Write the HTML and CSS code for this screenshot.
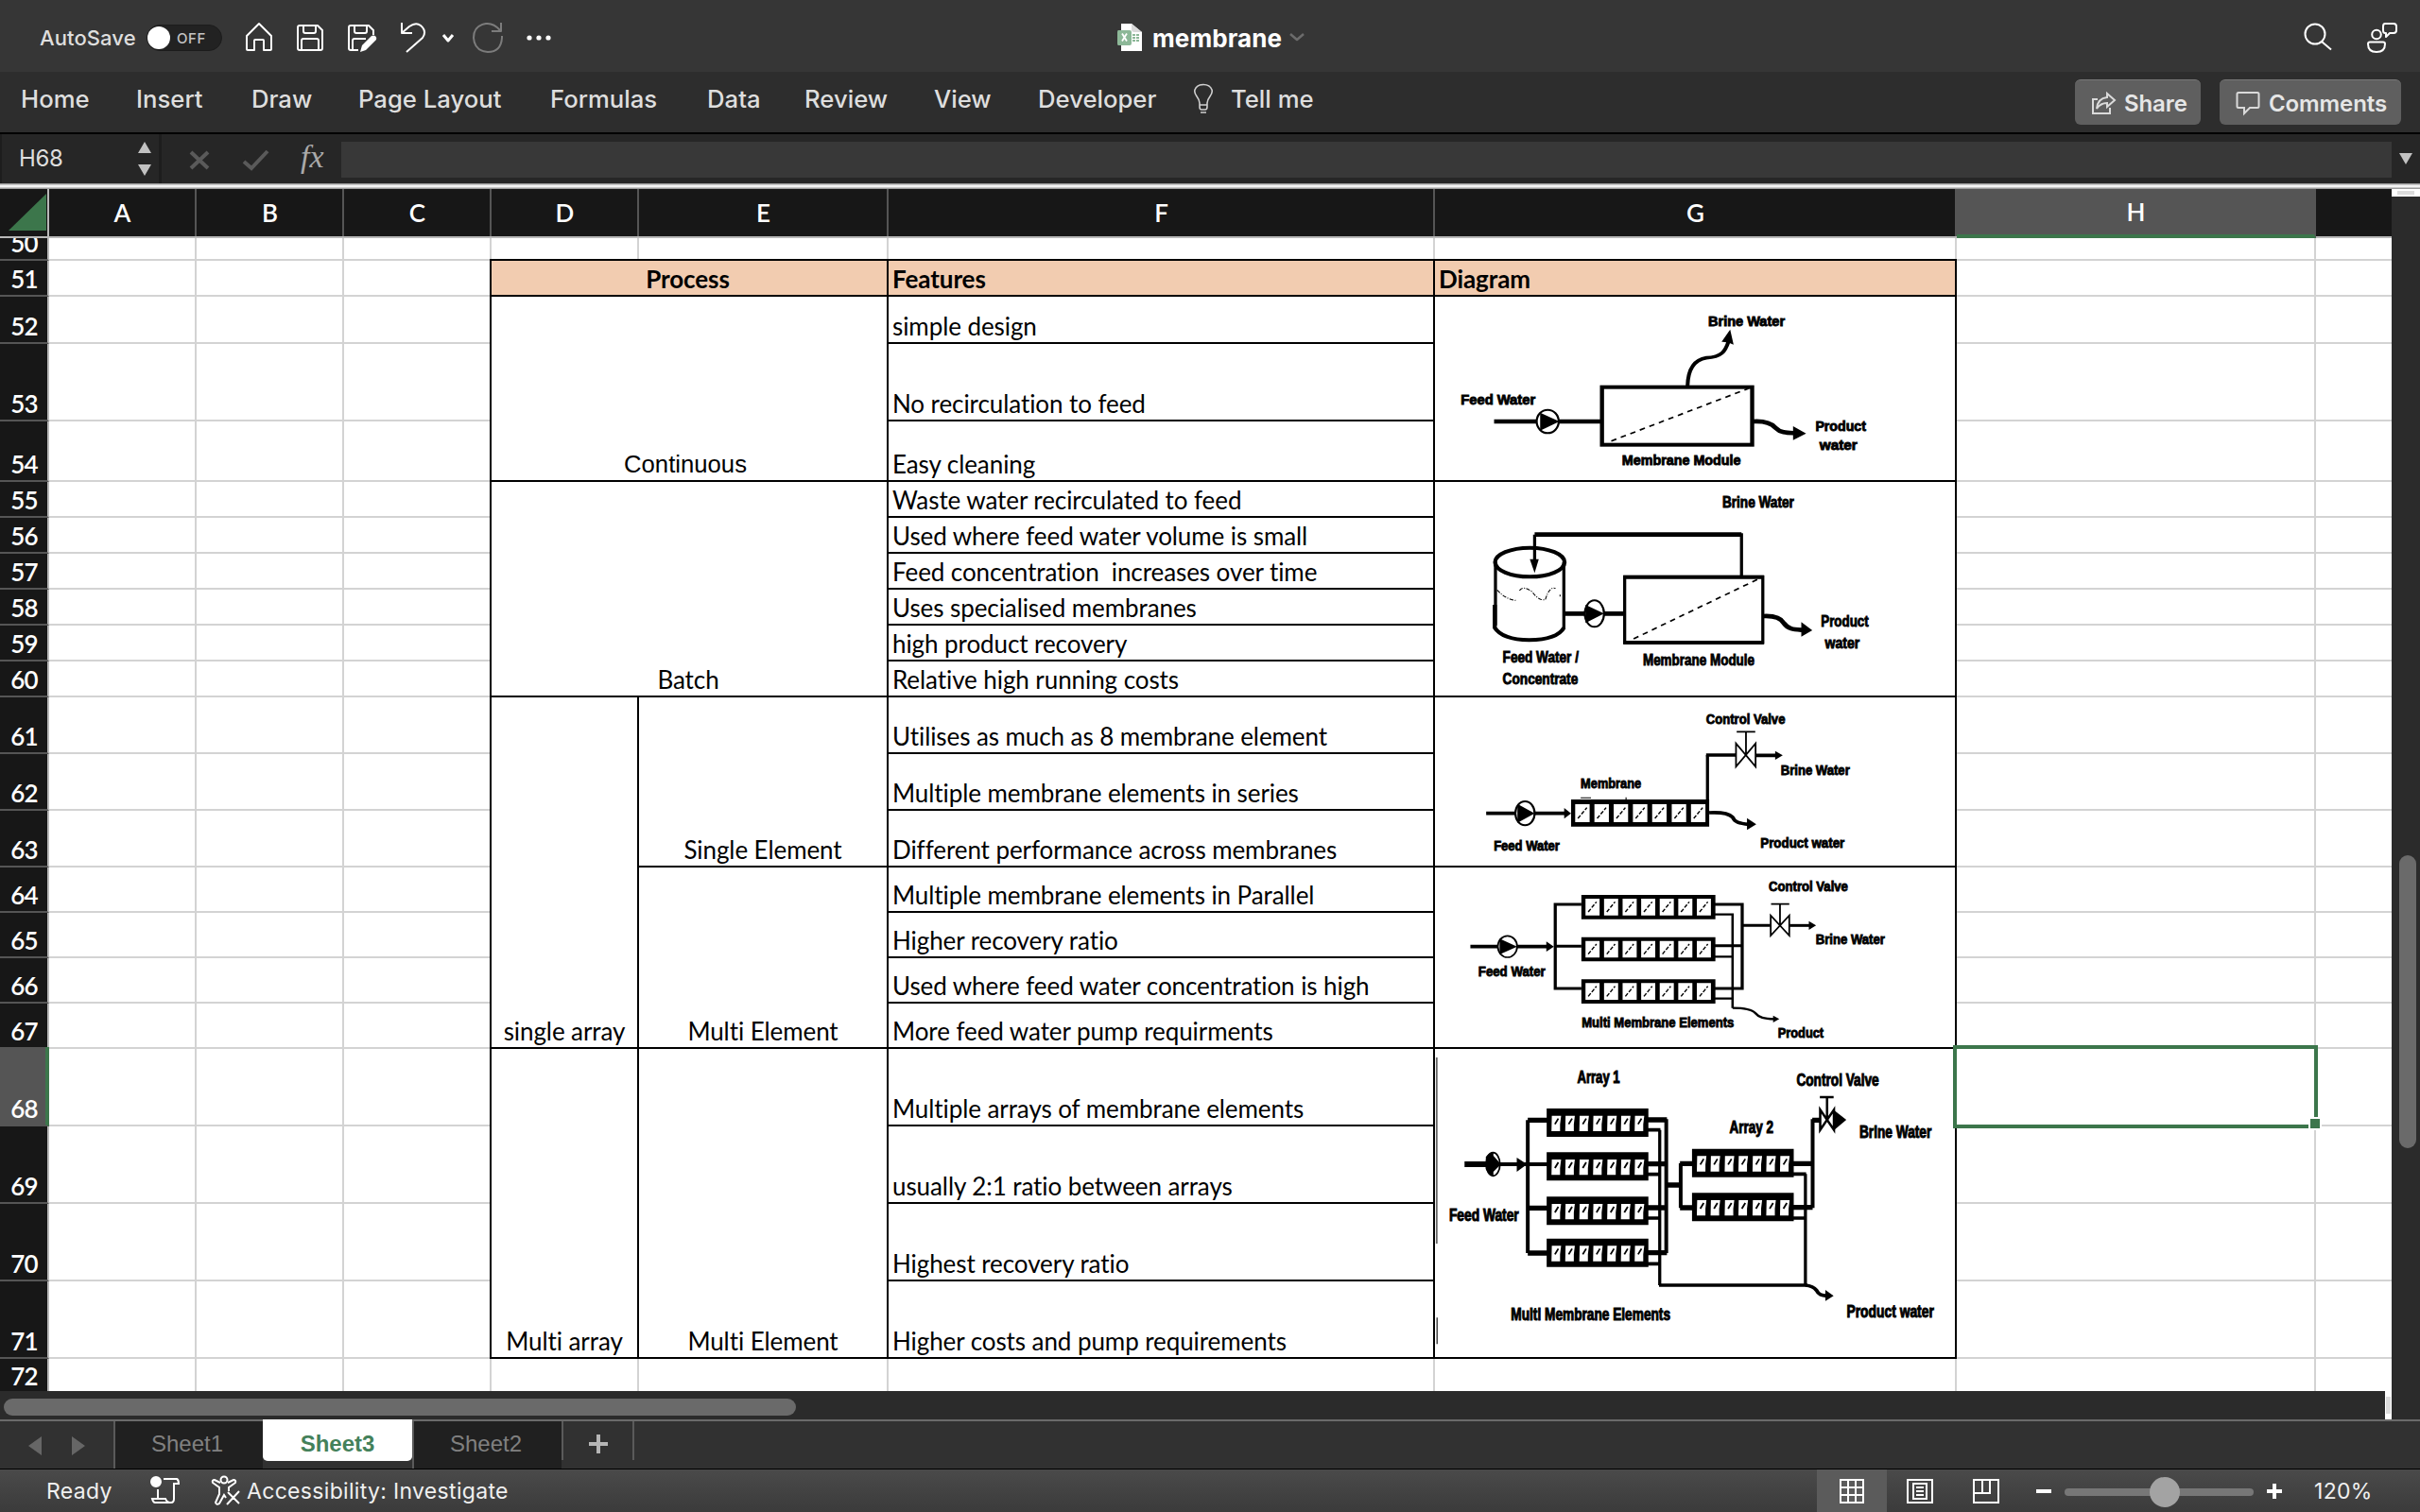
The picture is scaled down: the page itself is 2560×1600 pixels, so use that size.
FILE: index.html
```html
<!DOCTYPE html>
<html lang="en">
<head>
<meta charset="utf-8">
<title>membrane</title>
<link rel="stylesheet" href="styles.css">
</head>
<body>
<div class="app">
  <header class="titlebar">
    <div class="quick">
      <span class="autosave">AutoSave</span>
      <span class="toggle"><i class="knob"></i>OFF</span>
      <svg class="ic home" viewBox="258 22 32 36" width="32" height="36"><path d="M261 38 274 25l13 13v14q0 1-1 1h-7V43q0-1-1-1h-8q-1 0-1 1v10h-7q-1 0-1-1z"/></svg>
      <svg class="ic save" viewBox="312 22 32 36" width="32" height="36"><path d="M317 27h19l5 5v19q0 2-2 2h-22q-2 0-2-2V29q0-2 2-2zM321 27v6q0 2 2 2h9q2 0 2-2v-6M319 53V43q0-2 2-2h14q2 0 2 2v10"/></svg>
      <svg class="ic saveas" viewBox="366 22 36 36" width="36" height="36"><path d="M379 53h-8q-2 0-2-2V29q0-2 2-2h19l5 5v5M375 27v6q0 2 2 2h9q2 0 2-2v-6M373 53V43q0-2 2-2h12"/><path class="solid" d="M381 55l2-7 10-10q2-1 4 0 2 2 1 4l-11 11z"/></svg>
      <svg class="ic undo" viewBox="420 22 34 36" width="34" height="36"><path d="M425 24v11h11M425 35l8-7q7-5 12-1 7 6 2 13L430 55"/></svg>
      <svg class="ic chev" viewBox="466 34 17 14" width="17" height="14"><path class="thick" d="M469 38l5 6 5-6"/></svg>
      <svg class="ic redo" viewBox="498 22 36 36" width="36" height="36"><path class="dim" d="M530 24v9h-10M529 32q-7-8-15-7-13 2-13 15 1 14 15 15 14 0 15-15v-2"/></svg>
      <svg class="ic dots" viewBox="554 34 32 12" width="32" height="12"><circle class="solid" cx="560" cy="40" r="2.600"/><circle class="solid" cx="570" cy="40" r="2.600"/><circle class="solid" cx="580" cy="40" r="2.600"/></svg>
    </div>
    <div class="doc">
      <svg viewBox="1180 22 32 36" width="32" height="36"><path fill="#fff" d="M1186 25h11l11 9v20h-22z"/><path fill="#d9d9d9" d="M1197 25l11 9h-8q-3 0-3-3z"/><path fill="#8db898" d="M1183 32h12q2 0 2 2v12q0 2-2 2h-12q-1 0-1-2V34q0-2 1-2zM1198 36h3v2h-3zM1202 36h3v2h-3zM1198 39h3v2h-3zM1202 39h3v2h-3zM1198 42h3v2h-3zM1202 42h3v2h-3z"/><path stroke="#fff" stroke-width="1.800" d="M1187 35.500l5 8M1192 35.500l-5 8"/></svg>
      <b class="docname">membrane</b>
      <svg class="ic" viewBox="1362 34 20 14" width="20" height="14"><path class="dimmer" d="M1365 37l7 6 7-6"/></svg>
    </div>
    <div class="titleright">
      <svg class="ic" viewBox="2436 24 34 34" width="34" height="34"><circle cx="2449" cy="37" r="10.500"/><path d="M2456 45l10 8.500"/></svg>
      <svg class="ic" viewBox="2502 22 36 36" width="36" height="36"><circle cx="2514" cy="36.500" r="4.800"/><path d="M2507 44.500h14q2 0 2 2 0 8.500-9 8.500t-9-8.500q0-2 2-2zM2523 25h9q3 0 3 3v4q0 3-3 3h-4l-4 4v-4h-1q-2 0-2-3v-4q0-3 2-3z"/></svg>
    </div>
  </header>
  <nav class="ribbon">
    <div class="tabs">
      <span>Home</span><span>Insert</span><span>Draw</span><span>Page Layout</span><span>Formulas</span><span>Data</span><span>Review</span><span>View</span><span>Developer</span>
      <svg class="bulb" viewBox="1262 88 24 34" width="24" height="34"><path d="M1269 113v-4q0-3-3-7-3-4-2-7 2-5.500 9-5.500t9 5.500q1 3-2 7-3 4-3 7v4q0 3-2 3h-4q-2 0-2-3zM1269 111h8M1270 119h6"/></svg>
      <span>Tell me</span>
    </div>
    <div class="buttons">
      <button class="btn share"><svg viewBox="2211 94 28 28" width="28" height="28"><path d="M2219 104h-5v15h18v-6M2218 114q1-11 11-12v-4l8 7-8 7v-4q-7 0-11 6z"/></svg>Share</button>
      <button class="btn comments"><svg viewBox="2364 94 28 28" width="28" height="28"><path d="M2368 97h20q1.500 0 1.500 1.500v13q0 1.500-1.500 1.500h-8l-6 6v-6h-6q-1.500 0-1.500-1.500v-13q0-1.500 1.500-1.500z"/></svg>Comments</button>
    </div>
  </nav>
  <div class="formulabar">
    <div class="namebox"><span>H68</span><svg viewBox="144 148 18 42" width="18" height="42"><path d="M146 163l7-12 7 12zM146 175l7 12 7-12z"/></svg></div>
    <svg class="fxicons" viewBox="196 150 96 36" width="96" height="36"><path d="M202 161l18 17M220 161l-18 17"/><path d="M258 171l8 7 17-18"/></svg>
    <span class="fx">fx</span>
    <div class="field"></div>
    <svg class="fxdown" viewBox="2536 160 18 18" width="18" height="18"><path d="M2538 163h14l-7 12z"/></svg>
  </div>
  <div class="strip"></div>
  <main class="work">
    <section class="sheetarea">
      <div class="colheads">
        <div class="corner"><svg width="40" height="40" viewBox="0 0 40 40"><path d="M40 0v39H0z"/></svg></div>
        <div>A</div><div>B</div><div>C</div><div>D</div><div>E</div><div>F</div><div>G</div><div class="active">H</div><div class="nosep"></div>
      </div>
      <div class="grid">
        <div class="rh r50">50</div><div class="rh r51">51</div><div class="rh r52">52</div><div class="rh r53">53</div><div class="rh r54">54</div><div class="rh r55">55</div><div class="rh r56">56</div><div class="rh r57">57</div><div class="rh r58">58</div><div class="rh r59">59</div><div class="rh r60">60</div><div class="rh r61">61</div><div class="rh r62">62</div><div class="rh r63">63</div><div class="rh r64">64</div><div class="rh r65">65</div><div class="rh r66">66</div><div class="rh r67">67</div><div class="rh r68 active">68</div><div class="rh r69">69</div><div class="rh r70">70</div><div class="rh r71">71</div><div class="rh r72">72</div>
        <i class="line r50"></i><i class="line r51"></i><i class="line r52"></i><i class="line r53"></i><i class="line r54"></i><i class="line r55"></i><i class="line r56"></i><i class="line r57"></i><i class="line r58"></i><i class="line r59"></i><i class="line r60"></i><i class="line r61"></i><i class="line r62"></i><i class="line r63"></i><i class="line r64"></i><i class="line r65"></i><i class="line r66"></i><i class="line r67"></i><i class="line r68"></i><i class="line r69"></i><i class="line r70"></i><i class="line r71"></i>
        <i class="col cA"></i><i class="col cB"></i><i class="col cC"></i><i class="col cD"></i><i class="col cE"></i><i class="col cF"></i><i class="col cG"></i><i class="col cH"></i>

        <div class="cell head mid process">Process</div><div class="cell head cF r51">Features</div><div class="cell head cG r51">Diagram</div>
        <div class="cell mid continuous">Continuous</div><div class="cell mid batch">Batch</div>
        <div class="cell mid single">single array</div><div class="cell mid multi">Multi array</div>
        <div class="cell mid cE s61">Single Element</div><div class="cell mid cE s64">Multi Element</div><div class="cell mid cE s68">Multi Element</div>
        <div class="cell cF r52">simple design</div><div class="cell cF r53">No recirculation to feed</div><div class="cell cF r54">Easy cleaning</div>
        <div class="cell cF r55">Waste water recirculated to feed</div><div class="cell cF r56">Used where feed water volume is small</div><div class="cell cF r57">Feed concentration&nbsp; increases over time</div><div class="cell cF r58">Uses specialised membranes</div><div class="cell cF r59">high product recovery</div><div class="cell cF r60">Relative high running costs</div>
        <div class="cell cF r61">Utilises as much as 8 membrane element</div><div class="cell cF r62">Multiple membrane elements in series</div><div class="cell cF r63">Different performance across membranes</div>
        <div class="cell cF r64">Multiple membrane elements in Parallel</div><div class="cell cF r65">Higher recovery ratio</div><div class="cell cF r66">Used where feed water concentration is high</div><div class="cell cF r67">More feed water pump requirments</div>
        <div class="cell cF r68">Multiple arrays of membrane elements</div><div class="cell cF r69">usually 2:1 ratio between arrays</div><div class="cell cF r70">Highest recovery ratio</div><div class="cell cF r71">Higher costs and pump requirements</div>

        <div class="cell pic cG s52">
          <svg viewBox="22 42 1513 582" preserveAspectRatio="none">
            <rect class="w12" x="508" y="329" width="437" height="183"/>
            <path class="w5 dash" d="M535 500 935 333"/>
            <path class="w14" d="M194 438H508"/><ellipse class="hole w6" cx="350" cy="438" rx="32" ry="37"/><path class="f" d="M328 410l56 28-56 29z"/>
            <path class="w11" d="M757 325q2-80 55-89c45-2 55-22 64-51"/><path class="f" d="M881 146l10 48q-16-10-35-9z"/>
            <path class="w14" d="M948 438q45-3 65 20c15 17 35 16 58 17"/><path class="f" d="M1064 453l38 23-38 21z"/>
            <text lengthAdjust="spacingAndGlyphs" x="817" y="136" textLength="223">Brine Water</text><text lengthAdjust="spacingAndGlyphs" x="97" y="384" textLength="217">Feed Water</text><text lengthAdjust="spacingAndGlyphs" x="566" y="577" textLength="346">Membrane Module</text><text lengthAdjust="spacingAndGlyphs" x="1129" y="468" textLength="147">Product</text><text lengthAdjust="spacingAndGlyphs" x="1141" y="529" textLength="110">water</text>
          </svg>
        </div>
        <div class="cell pic cG s55">
          <svg viewBox="22 15 1513 678" preserveAspectRatio="none">
            <path class="w14" d="M312 182H914"/><path class="w9" d="M312 182V270M914 178V315"/><path class="f" d="M298 260h26l-12 44z"/>
            <ellipse class="w12" cx="298" cy="270" rx="101" ry="46"/><path class="w9" d="M198 270V470M397 270V480"/><path class="w12" d="M196 405V478q22 38 100 39 82-2 101-39"/>
            <path class="w3 dash2" d="M203 358q22 28 54 33M268 360q10-18 38 5 18 28 37 24 12-44 30-36M386 373v6"/>
            <path class="w14" d="M400 433H575"/><ellipse class="hole w6" cx="486" cy="433" rx="28" ry="42"/><path class="f" d="M460 405l54 28-54 30z"/>
            <rect class="w9" x="574" y="316" width="402" height="209"/><path class="w12" d="M570 317H979M570 525H979"/><path class="w5 dash" d="M600 513 965 322"/>
            <path class="w14" d="M979 441q45-2 58 22c14 20 28 20 55 22"/><path class="f" d="M1088 460l32 26-32 20z"/>
            <g class="mid-size"><text lengthAdjust="spacingAndGlyphs" x="858" y="96" textLength="209">Brine Water</text><text lengthAdjust="spacingAndGlyphs" x="219" y="589" textLength="221">Feed Water /</text><text lengthAdjust="spacingAndGlyphs" x="219" y="656" textLength="219">Concentrate</text><text lengthAdjust="spacingAndGlyphs" x="627" y="597" textLength="325">Membrane Module</text><text lengthAdjust="spacingAndGlyphs" x="1145" y="475" textLength="139">Product</text><text lengthAdjust="spacingAndGlyphs" x="1157" y="543" textLength="101">water</text></g>
          </svg>
        </div>
        <div class="cell pic cG s61">
          <svg viewBox="22 24 1513 534" preserveAspectRatio="none">
            <path class="w11" d="M171 392H405"/><ellipse class="hole w6" cx="284" cy="392" rx="28" ry="38"/><path class="f" d="M262 362l50 30-50 30zM398 375l20 17-20 17z"/>
            <path class="f" d="M418 348H820V434H418z"/>
            <path class="cut" d="M430 363h42v57h-42zM486 363h42v57h-42zM542 363h42v57h-42zM598 363h42v57h-42zM654 363h42v57h-42zM711 363h42v57h-42zM767 363h42v57h-42z"/>
            <path class="w4 slash" d="M438 408l26-34M494 408l26-34M550 408l26-34M606 408l26-34M662 408l26-34M719 408l26-34M775 408l26-34"/>
            <path class="w3" d="M446 343h30M578 341v8"/>
            <path class="w9" d="M815 352V207"/><path class="w11" d="M811 207H898M956 208H1015"/><path class="f" d="M1012 194l22 14-22 14z"/>
            <path class="w5" d="M898 170v74l57-74v74zM927 208v-75M900 133h54"/>
            <path class="w11" d="M820 390q52-3 68 14c6 16 18 20 48 23"/><path class="f" d="M930 407l27 20-27 18z"/>
            <text lengthAdjust="spacingAndGlyphs" x="811" y="108" textLength="230">Control Valve</text><text lengthAdjust="spacingAndGlyphs" x="1028" y="271" textLength="201">Brine Water</text><text lengthAdjust="spacingAndGlyphs" x="446" y="311" textLength="176">Membrane</text><text lengthAdjust="spacingAndGlyphs" x="193" y="511" textLength="192">Feed Water</text><text lengthAdjust="spacingAndGlyphs" x="969" y="500" textLength="245">Product water</text>
          </svg>
        </div>
        <div class="cell pic cG s64">
          <svg viewBox="22 24 1513 570" preserveAspectRatio="none">
            <defs><g id="bank"><path class="f" d="M448 0H838V77H448z"/><path class="cut" d="M460 12h41v53h-41zM514 12h41v53h-41zM568 12h41v53h-41zM622 12h41v53h-41zM676 12h41v53h-41zM730 12h41v53h-41zM784 12h41v53h-41z"/><path class="w4 slash" d="M468 54l24-32M522 54l24-32M576 54l24-32M630 54l24-32M684 54l24-32M738 54l24-32M792 54l24-32"/></g></defs>
            <path class="w11" d="M125 275H350"/><ellipse class="hole w5" cx="233" cy="275" rx="28" ry="34"/><path class="f" d="M210 250l51 25-51 25zM346 259l22 16-22 16z"/>
            <path class="w9" d="M448 141H372V408H448M368 274H448M836 141H916V408H836M836 272H916M916 208H998"/><path class="w7" d="M836 173H888V470M836 307H888M836 440H888"/>
            <use href="#bank" y="111"/><use href="#bank" y="245"/><use href="#bank" y="379"/>
            <path class="w5" d="M999 176v64l54-64v64zM1026 208v-68M1000 140h53"/><path class="w9" d="M1054 208h60"/><path class="f" d="M1110 194l21 14-21 14z"/>
            <path class="w7" d="M888 470q52 0 66 16c10 14 26 18 56 19"/><path class="f" d="M1006 494l18 11-18 11z"/>
            <text lengthAdjust="spacingAndGlyphs" x="993" y="100" textLength="231">Control Valve</text><text lengthAdjust="spacingAndGlyphs" x="1130" y="268" textLength="201">Brine Water</text><text lengthAdjust="spacingAndGlyphs" x="148" y="368" textLength="195">Feed Water</text><text lengthAdjust="spacingAndGlyphs" x="449" y="531" textLength="443">Multi Membrane Elements</text><text lengthAdjust="spacingAndGlyphs" x="1020" y="565" textLength="133">Product</text>
          </svg>
        </div>
        <div class="cell pic cG s68">
          <svg viewBox="22 15 1513 978" preserveAspectRatio="none">
            <defs><g id="array"><path class="f" d="M347 0H643V90H347z"/><path class="cut" d="M362 23h27l-3 27v22h-25zM402 23h27l-3 27v22h-25zM443 23h27l-3 27v22h-25zM483 23h27l-3 27v22h-25zM524 23h27l-3 27v22h-25zM564 23h27l-3 27v22h-25zM604 23h27l-3 27v22h-25z"/><path class="w5" d="M371 50l10-18M411 50l10-18M452 50l10-18M492 50l10-18M533 50l10-18M573 50l10-18M613 50l10-18"/></g></defs>
            <path class="w5 grey" d="M27 42V633"/><path class="w3" d="M28 868v84"/>
            <path class="w18" d="M108 381H205"/><path class="w12" d="M200 381H350"/><ellipse class="w5" cx="191" cy="381" rx="20" ry="37"/><path class="f" d="M170 358q10-16 22-14v10l22 27-22 24v12q-12 0-22-20zM260 360l30 21-30 24z"/>
            <path class="w11" d="M292 241V663M695 238V663M737 378V520M1121 238V520"/><path class="w9" d="M676 272V765M1100 412V765"/>
            <path class="w16" d="M292 241H350M292 520H350M292 663H350M640 240H697M640 380H695M640 519H695M640 662H697M695 447H737M735 379H772M735 519H772M1064 379H1121M1064 518H1121M1120 241h24"/>
            <path class="w11" d="M640 272H678M640 413H676M640 552H676M640 697H676M674 765H1105M1064 412H1102M1064 552H1100"/>
            <use href="#array" y="204"/><use href="#array" y="343"/><use href="#array" y="484"/><use href="#array" y="617"/><use href="#array" x="423" y="332"/><use href="#array" x="423" y="472"/>
            <path class="w7" d="M1143 208v64l40-64v64zM1163 240v-72M1142 168h40"/><path class="f" d="M1184 210l35 30-35 32z"/>
            <path class="w11" d="M1100 765q22 2 32 16c6 14 14 16 32 18"/><path class="f" d="M1158 780l24 19-24 16z"/>
            <g class="big"><text lengthAdjust="spacingAndGlyphs" x="436" y="122" textLength="124">Array 1</text><text lengthAdjust="spacingAndGlyphs" x="1074" y="133" textLength="240">Control Valve</text><text lengthAdjust="spacingAndGlyphs" x="879" y="283" textLength="128">Array 2</text><text lengthAdjust="spacingAndGlyphs" x="1257" y="298" textLength="210">Brine Water</text><text lengthAdjust="spacingAndGlyphs" x="63" y="560" textLength="203">Feed Water</text><text lengthAdjust="spacingAndGlyphs" x="243" y="877" textLength="464">Multi Membrane Elements</text><text lengthAdjust="spacingAndGlyphs" x="1220" y="868" textLength="254">Product water</text></g>
          </svg>
        </div>
        <div class="selection"><i class="handle"></i></div>
      </div>
      <div class="hscroll"><div class="hthumb"></div><div class="hsplit"><i></i></div></div>
    </section>
    <aside class="vscroll"><div class="vsplit"><i></i></div><div class="vthumb"></div></aside>
  </main>
  <div class="sheettabs">
    <svg class="arrows" viewBox="0 0 120 50" width="120" height="50"><path d="M44 16v20L30 26zM76 16v20l14-10z"/></svg>
    <div class="stab">Sheet1</div><div class="stab on"><span>Sheet3</span></div><div class="stab">Sheet2</div>
    <div class="plus"><svg width="22" height="22" viewBox="0 0 22 22"><path d="M11 1v20M1 11h20"/></svg></div>
  </div>
  <footer class="status">
    <span class="ready">Ready</span>
    <svg class="macro" viewBox="158 1560 34 34" width="34" height="34"><circle cx="165" cy="1567" r="5" fill="#fff"/><path d="M173 1564h14q2 1 2 5h-5v16q0 4-3 4h-17q-2 0-3-4h14q1 3 4 4M167 1575v9"/></svg>
    <svg class="access" viewBox="222 1560 36 36" width="36" height="36"><circle cx="237" cy="1566" r="3.500"/><path d="M233 1569l-6-3q-3 0-2 3l7 5v7l-4 9q1 3 4 1l5-9 2 3M241 1569l6-3q3 0 2 3l-7 5v4M241 1579l12 12M253 1578l-13 14"/></svg>
    <span class="acc">Accessibility: Investigate</span>
    <div class="views">
      <div class="view on"><svg width="28" height="28" viewBox="0 0 28 28"><path d="M2 2h24v24H2zM10 2v24M18 2v24M2 10h24M2 18h24"/></svg></div>
      <div class="view"><svg width="28" height="28" viewBox="0 0 28 28"><path d="M1 2h26v24H1zM7 6h14v16H7zM10 10h8M10 14h8M10 18h8"/></svg></div>
      <div class="view"><svg width="28" height="28" viewBox="0 0 28 28"><path d="M1 2h26v24H1zM1 16h17V2M10 2v14"/></svg></div>
    </div>
    <div class="zoom"><i class="minus"></i><div class="slider"><i class="thumb"></i></div><svg width="16" height="16" viewBox="0 0 16 16"><path d="M8 0v16M0 8h16"/></svg><span>120%</span></div>
  </footer>
</div>
</body>
</html>
```
FILE: styles.css
```css
* { box-sizing: border-box; }
body { margin: 0; background: #2b2b2b; font-family: Inter, "Liberation Sans", sans-serif; }
.app { width: 2560px; height: 1600px; display: flex; flex-direction: column; overflow: hidden; }
svg { display: block; flex: none; fill: none; }

/* title bar */
.titlebar { height: 76px; background: #363636; display: grid; grid-template-columns: 1180px 1fr 124px; color: #dedede; }
.titlebar > div { display: flex; align-items: center; height: 80px; }
.ic { stroke: #fff; stroke-width: 2; stroke-linejoin: round; }
.ic .solid { fill: #fff; stroke: none; }
.ic .thick { stroke-width: 3; }
.ic .dim { stroke: #7c7c7c; }
.ic .dimmer { stroke: #6c6c6c; stroke-width: 2.500; }
.autosave { margin-left: 42px; width: 113px; font-size: 22px; font-weight: 500; letter-spacing: 0.1px; }
.toggle { width: 80px; height: 28px; border-radius: 14px; background: #222; border: 1px solid #1c1c1c; display: flex; align-items: center; font-size: 15px; font-weight: 500; letter-spacing: 0.600px; color: #c4c4c4; }
.knob { width: 24px; height: 24px; border-radius: 50%; background: #fff; margin-right: 7px; }
.home { margin-left: 23px; } .save { margin-left: 22px; } .saveas { margin-left: 22px; } .undo { margin-left: 18px; }
.chev { margin-left: 12px; } .redo { margin-left: 15px; } .dots { margin-left: 20px; }
.docname { font-size: 26px; font-weight: 700; color: #fff; margin-left: 7px; width: 143px; letter-spacing: 0.1px; }
.titleright { justify-content: space-between; padding-right: 22px; }

/* ribbon */
.ribbon { height: 66px; background: #2d2d2d; border-bottom: 2px solid #000; display: flex; justify-content: space-between; color: #dedede; }
.tabs { display: grid; grid-template-columns: 122px 122px 113px 203px 166px 103px 137px 110px 163px 41px 120px; padding-left: 22px; padding-top: 12px; font-size: 25.700px; line-height: 34px; font-weight: 500; white-space: nowrap; }
.bulb { stroke: #cfcfcf; stroke-width: 1.600; margin-left: 1px; }
.buttons { display: flex; gap: 20px; padding: 8px 20px 0 0; }
.btn { height: 48px; border: 0; border-top: 1px solid #7a7a7a; border-radius: 6px; background: #5f5f5f; color: #e6e6e6; font: 600 24px Inter, sans-serif; display: flex; align-items: center; gap: 8px; padding: 1px 0 0 16px; letter-spacing: -0.1px; }
.btn svg { stroke: #dadada; stroke-width: 2; }
.share { width: 133px; } .comments { width: 192px; }

/* formula bar */
.formulabar { height: 52px; background: #262626; display: flex; align-items: center; }
.namebox { width: 171px; height: 100%; border-right: 3px solid #1d1d1d; border-left: 2px solid #1d1d1d; display: flex; align-items: center; justify-content: space-between; padding: 0 6px 0 18px; font-size: 24px; color: #dedede; letter-spacing: -0.3px; }
.namebox svg, .fxdown { fill: #c2c2c2; }
.namebox span { margin-top: -2px; }
.fxicons { margin-left: 25px; stroke: #5a5a5a; stroke-width: 4; }
.fx { width: 69px; padding-left: 26px; font: italic 34px "Liberation Serif", serif; color: #a9a9a9; margin-top: -4px; }
.field { width: 2169px; height: 38px; background: #383838; margin-top: 1px; }
.fxdown { margin-left: 6px; }
.strip { height: 6px; background: linear-gradient(#9c9c9c 0 1px, #c8c8c8 1px 2px, #f4f4f4 2px 4px, #c8c8c8 4px 5px, #9c9c9c 5px); }

/* sheet */
.work { display: flex; height: 1302px; }
.sheetarea { width: 2530px; }
.colheads, .grid { display: grid; grid-template-columns: 52px 156px 156px 156px 156px 264px 578px 552px 380px 80px; font-family: Lato, "Liberation Sans", sans-serif; font-size: 26px; }
.colheads { height: 52px; background: #171717; color: #fff; font-weight: 600; border-bottom: 2px solid #b9b9b9; }
.colheads div { border-right: 2px solid #555; display: flex; align-items: center; justify-content: center; padding-left: 1px; padding-bottom: 1px; }
.colheads .nosep { border-color: transparent; }
.colheads .corner { border-color: #b9b9b9; padding: 0 0 1px 8px; }
.corner svg { fill: #3c764b; }
.colheads .active { background: #555; border-color: #555; border-bottom: 4px solid #3c764b; margin-bottom: -2px; }
.grid { height: 1220px; overflow: hidden; background: #fff; position: relative; grid-template-rows: 24px 38px 50px 82px 64px repeat(6, 38px) repeat(3, 60px) repeat(4, 48px) repeat(4, 82px) 34px; letter-spacing: -0.080px; }
.rh { grid-column: 1; background: #171717; color: #fff; font-weight: 600; border-right: 2px solid #b9b9b9; border-bottom: 2px solid #555; display: flex; align-items: flex-end; justify-content: center; padding: 0 0 1px 1px; overflow: hidden; min-height: 0; line-height: 31px; letter-spacing: -0.900px; }
.rh.active { background: #555; border-right: 4px solid #3c764b; margin-top: -2px; padding-left: 3px; border-bottom-color: #555; }
.rh.r72 { align-items: flex-start; border-bottom: 0; padding-top: 3px; }
.line { grid-column: 2 / 11; border-bottom: 2px solid #d3d3d3; }
.col { grid-row: 1 / 24; border-right: 2px solid #d3d3d3; }
.r50 { grid-row: 1; } .r51 { grid-row: 2; } .r52 { grid-row: 3; } .r53 { grid-row: 4; } .r54 { grid-row: 5; } .r55 { grid-row: 6; }
.r56 { grid-row: 7; } .r57 { grid-row: 8; } .r58 { grid-row: 9; } .r59 { grid-row: 10; } .r60 { grid-row: 11; } .r61 { grid-row: 12; }
.r62 { grid-row: 13; } .r63 { grid-row: 14; } .r64 { grid-row: 15; } .r65 { grid-row: 16; } .r66 { grid-row: 17; } .r67 { grid-row: 18; }
.r68 { grid-row: 19; } .r69 { grid-row: 20; } .r70 { grid-row: 21; } .r71 { grid-row: 22; } .r72 { grid-row: 23; }
.cA { grid-column: 2; } .cB { grid-column: 3; } .cC { grid-column: 4; } .cD { grid-column: 5; } .cE { grid-column: 6; } .cF { grid-column: 7; } .cG { grid-column: 8; } .cH { grid-column: 9; }
.s52 { grid-row: 3 / 6; } .s55 { grid-row: 6 / 12; } .s61 { grid-row: 12 / 15; } .s64 { grid-row: 15 / 19; } .s68 { grid-row: 19 / 23; }
.cell { background: #fff; color: #000; border: 2px solid #000; margin: -2px 0 0 -2px; padding: 0 0 1px 4px; display: flex; align-items: flex-end; line-height: 31px; white-space: nowrap; min-width: 0; min-height: 0; }
.mid { justify-content: center; padding-left: 0; }
.head { background: #f2ccb0; font-weight: 700; }
.process { grid-area: 2 / 5 / 3 / 7; padding-right: 3px; }
.continuous { grid-area: 3 / 5 / 6 / 7; font-family: "Liberation Sans", Arial, sans-serif; font-size: 25.700px; letter-spacing: 0; padding: 0 8px 1px 0; }
.batch { grid-area: 6 / 5 / 12 / 7; padding-right: 2px; }
.single { grid-area: 12 / 5 / 19 / 6; } .multi { grid-area: 19 / 5 / 23 / 6; }
.selection { grid-area: 19 / 9; position: relative; border: 4px solid #3c764b; margin: -4px -2px -2px -4px; }
.handle { position: absolute; right: -8px; bottom: -6px; width: 14px; height: 14px; background: #3c764b; border: 2px solid #fff; }

/* diagrams */
.pic { padding: 0; }
.pic svg { width: 100%; height: 100%; stroke: #000; }
.pic text { fill: #000; stroke: #000; stroke-width: 2.600; font: 700 43px "Liberation Sans", Arial, sans-serif; letter-spacing: 0; }
.pic .mid-size text { font-size: 47px; }
.pic .big text { font-size: 53px; stroke-width: 3; }
.f { fill: #000; stroke: none; } .cut { fill: #fff; stroke: none; } .hole { fill: #fff; }
.w3 { stroke-width: 3; } .w4 { stroke-width: 4; } .w5 { stroke-width: 5; } .w6 { stroke-width: 6; } .w7 { stroke-width: 7; } .w9 { stroke-width: 9; }
.w11 { stroke-width: 11; } .w12 { stroke-width: 12; } .w14 { stroke-width: 14; } .w16 { stroke-width: 16; } .w18 { stroke-width: 18; }
.dash { stroke-dasharray: 16 14; } .dash2 { stroke-dasharray: 12 4 3 4; } .slash { stroke-dasharray: 12 5; } .grey { stroke: #666; }

/* scrollbars */
.hscroll { height: 30px; background: #2b2b2b; display: flex; justify-content: space-between; align-items: center; padding-left: 4px; }
.hthumb { width: 838px; height: 18px; border-radius: 9px; background: #6a6a6a; margin-top: 4px; }
.hsplit { width: 7px; height: 30px; background: #fff; padding: 6px 1px; }
.hsplit i { display: block; height: 18px; background: #dcdcdc; }
.vscroll { width: 30px; background: #2b2b2b; }
.vsplit { height: 8px; background: #fff; padding: 2px 6px; }
.vsplit i { display: block; height: 4px; background: #dcdcdc; }
.vthumb { width: 18px; height: 310px; border-radius: 9px; background: #6a6a6a; margin: 697px 0 0 8px; }

/* sheet tabs */
.sheettabs { height: 52px; background: #313131; border-top: 2px solid #6a6a6a; display: flex; }
.arrows { fill: #666; }
.stab { width: 158px; height: 50px; background: #202020; color: #808080; border-left: 2px solid #5a5a5a; display: flex; justify-content: center; padding: 10px 4px 0 0; line-height: 28px; font-family: "Liberation Sans", sans-serif; font-size: 24px; }
.stab.on { background: none; border: 0; padding: 0; color: #44815a; font-weight: 700; }
.stab.on span { width: 100%; height: 44px; margin-top: -2px; padding-top: 12px; text-align: center; background: #fff; border-radius: 0 0 5px 5px; }
.plus { width: 77px; height: 41px; border-left: 2px solid #5a5a5a; border-right: 2px solid #5a5a5a; display: flex; align-items: center; justify-content: center; padding-top: 7px; }
.plus svg { stroke: #b5b5b5; stroke-width: 4; }

/* status bar */
.status { height: 46px; border-top: 1px solid #000; background: linear-gradient(#4a4a4a, #3b3b3b); color: #f0f0f0; font-size: 23px; letter-spacing: 0.320px; display: flex; align-items: center; white-space: nowrap; }
.ready { margin-left: 49px; width: 109px; }
.status svg { stroke: #fff; stroke-width: 2; }
.access { margin-left: 30px; }
.acc { margin-left: 3px; width: 1661px; }
.views { display: flex; height: 100%; width: 216px; }
.view { width: 70px; display: flex; align-items: center; justify-content: center; }
.view.on { background: #5b5b5b; width: 74px; }
.zoom { display: flex; align-items: center; margin-left: 16px; }
.minus { width: 16px; height: 4px; background: #fff; }
.slider { width: 200px; height: 8px; margin: 2px 14px 0; border-radius: 4px; background: #777; display: flex; align-items: center; }
.thumb { width: 32px; height: 32px; border-radius: 50%; background: #a3a3a3; margin-left: 90px; }
.zoom svg { stroke-width: 4; }
.zoom span { margin-left: 34px; }
```
